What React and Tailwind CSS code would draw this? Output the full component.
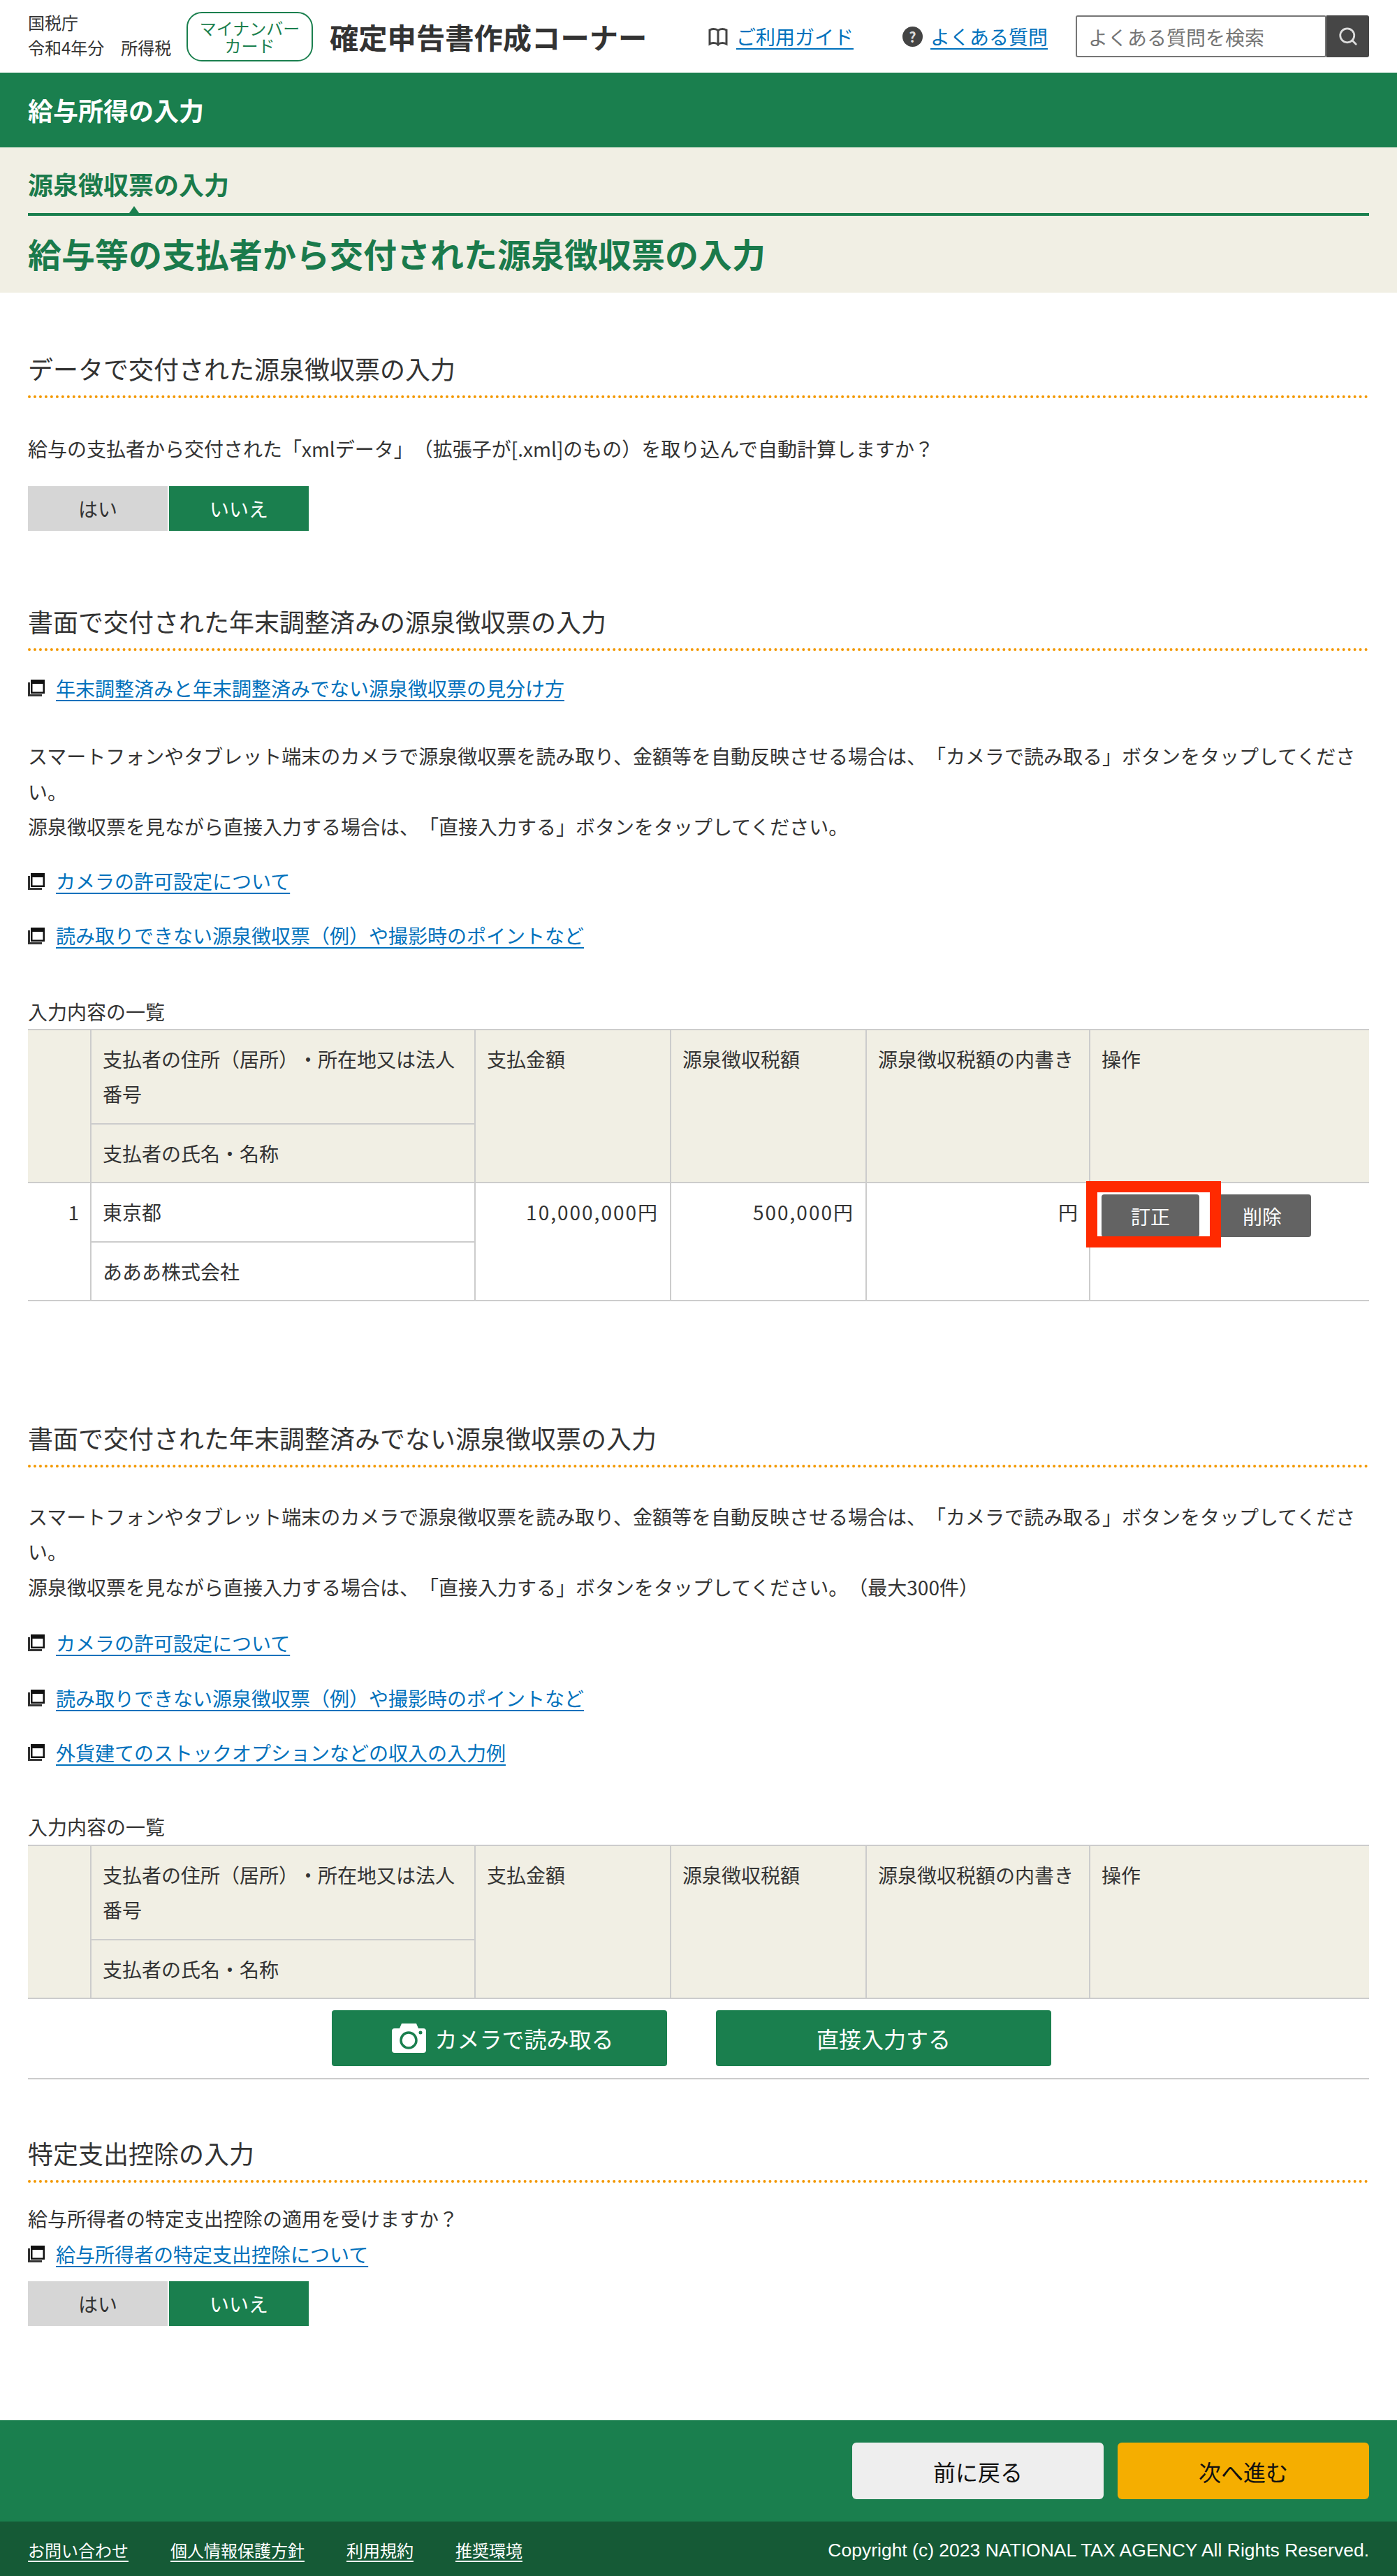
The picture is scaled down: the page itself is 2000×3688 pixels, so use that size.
import { Search } from "lucide-react";

const jp = { fontFamily: '"Noto Sans CJK JP", "Noto Sans", sans-serif' };

function WindowIcon() {
    return (
        <svg width="24" height="24" viewBox="0 0 24 24" className="mr-4 shrink-0">
            <path d="M0 4h3v17h17v3H0z" fill="#333" />
            <rect x="4" y="0" width="20" height="20" fill="#111" />
            <rect x="6.5" y="6" width="15" height="11.5" fill="#fff" />
        </svg>
    );
}

function LinkRow({ children, className = "" }) {
    return (
        <div className={`flex items-center h-[50px] ${className}`}>
            <WindowIcon />
            <a className="text-[#0071bc] underline underline-offset-[5px] decoration-2">{children}</a>
        </div>
    );
}

function SectionHeading({ children, className = "" }) {
    return (
        <h2 className={`text-[36px] leading-[54px] pb-3 border-b-4 border-dotted border-[#f39800] ${className}`}>
            {children}
        </h2>
    );
}

function Toggle({ className = "" }) {
    return (
        <div className={`flex gap-[2px] ${className}`}>
            <button className="w-[200px] h-[64px] bg-[#d6d6d6] text-[#333]">はい</button>
            <button className="w-[200px] h-[64px] bg-[#1a7f4e] text-white">いいえ</button>
        </div>
    );
}

const cell = "border-2 border-[#ccc] px-4 py-4 align-top font-normal text-left";

function TableHead() {
    return (
        <>
            <colgroup>
                <col className="w-[90px]" />
                <col className="w-[550px]" />
                <col className="w-[280px]" />
                <col className="w-[280px]" />
                <col className="w-[320px]" />
                <col className="w-[400px]" />
            </colgroup>
            <thead className="bg-[#f1efe4]">
                <tr>
                    <th rowSpan={2} className={`${cell} border-l-0`}></th>
                    <th className={cell}>支払者の住所（居所）・所在地又は法人番号</th>
                    <th rowSpan={2} className={cell}>支払金額</th>
                    <th rowSpan={2} className={cell}>源泉徴収税額</th>
                    <th rowSpan={2} className={cell}>源泉徴収税額の内書き</th>
                    <th rowSpan={2} className={`${cell} border-r-0`}>操作</th>
                </tr>
                <tr>
                    <th className={cell}>支払者の氏名・名称</th>
                </tr>
            </thead>
        </>
    );
}

function GrayButton({ children }) {
    return (
        <button className="w-[140px] h-[61px] rounded-[4px] bg-[#636363] text-white">{children}</button>
    );
}

export default function App() {
    return (
        <div className="bg-white text-[#333] text-[28px] leading-[50.4px] [text-spacing-trim:space-all]" style={jp}>
            {/* Header */}
            <header className="h-[104px] flex items-center justify-between px-10">
                <div className="flex items-center">
                    <div className="w-[227px] text-[24px] leading-[36px] mb-1">
                        <p>国税庁</p>
                        <p>令和4年分　所得税</p>
                    </div>
                    <div className="w-[181px] h-[71px] border-2 border-[#1a7f4e] rounded-[22px] flex items-center justify-center text-center text-[#1a7f4e] text-[24px] leading-[25px]">
                        マイナンバー<br />カード
                    </div>
                    <p className="ml-6 text-[41.300px] leading-[60px] font-bold whitespace-nowrap">確定申告書作成コーナー</p>
                </div>
                <div className="flex items-center">
                    <svg width="28" height="28" viewBox="0 0 28 28" fill="none" stroke="#444" strokeWidth="3" className="mr-3">
                        <path d="M14 6C12 3 6 3 2 5V25C6 23 12 23 14 26C16 23 22 23 26 25V5C22 3 16 3 14 6ZM14 6V26" />
                    </svg>
                    <a className="text-[#0071bc] underline underline-offset-[5px] decoration-2">ご利用ガイド</a>
                    <span className="ml-[70px] mr-[11px] w-[29px] h-[29px] rounded-full bg-[#444] text-[#ddd] text-[20px] leading-[29px] text-center font-bold">?</span>
                    <a className="text-[#0071bc] underline underline-offset-[5px] decoration-2">よくある質問</a>
                    <div className="ml-10 flex h-[60px]">
                        <div className="w-[359px] border-2 border-[#767676] rounded-[3px] pl-[16px] text-[#757575] leading-[58px]">よくある質問を検索</div>
                        <div className="w-[61px] bg-[#464646] rounded-r-[3px] flex items-center justify-center">
                            <Search size={30} color="#ddd" strokeWidth={2.200} />
                        </div>
                    </div>
                </div>
            </header>

            {/* Page title */}
            <div className="h-[107px] bg-[#1a7f4e] flex items-center px-10 text-white text-[36px] font-bold">給与所得の入力</div>
            <div className="h-[208px] bg-[#f1efe4] px-10 text-[#1a7a4b] font-bold">
                <div className="relative h-[98px] border-b-4 border-[#1a7f4e] flex items-end">
                    <p className="text-[36px] leading-[48px] pb-[18px]">源泉徴収票の入力</p>
                    <span className="absolute left-[145px] bottom-0 w-0 h-0 border-x-[7px] border-x-transparent border-b-[10px] border-b-[#1a7f4e]"></span>
                </div>
                <h1 className="mt-[23px] text-[48px] leading-[60px]">給与等の支払者から交付された源泉徴収票の入力</h1>
            </div>

            <main className="px-10">
                {/* XML */}
                <SectionHeading className="mt-[81px]">データで交付された源泉徴収票の入力</SectionHeading>
                <p className="mt-[47px]">給与の支払者から交付された「xmlデータ」（拡張子が[.xml]のもの）を取り込んで自動計算しますか？</p>
                <Toggle className="mt-[29px]" />

                {/* Year-end adjusted */}
                <SectionHeading className="mt-[102px]">書面で交付された年末調整済みの源泉徴収票の入力</SectionHeading>
                <LinkRow className="mt-[28px]">年末調整済みと年末調整済みでない源泉徴収票の見分け方</LinkRow>
                <p className="mt-[47px]">
                    スマートフォンやタブレット端末のカメラで源泉徴収票を読み取り、金額等を自動反映させる場合は、「カメラで読み取る」ボタンをタップしてください。<br />
                    源泉徴収票を見ながら直接入力する場合は、「直接入力する」ボタンをタップしてください。
                </p>
                <LinkRow className="mt-[28px]">カメラの許可設定について</LinkRow>
                <LinkRow className="mt-[28px]">読み取りできない源泉徴収票（例）や撮影時のポイントなど</LinkRow>
                <p className="mt-[58px]">入力内容の一覧</p>
                <table className="w-full table-fixed border-collapse">
                    <TableHead />
                    <tbody>
                        <tr>
                            <td rowSpan={2} className={`${cell} border-l-0 text-right!`}>1</td>
                            <td className={cell}>東京都</td>
                            <td rowSpan={2} className={`${cell} text-right! tracking-[2px]`}>10,000,000円</td>
                            <td rowSpan={2} className={`${cell} text-right! tracking-[2px]`}>500,000円</td>
                            <td rowSpan={2} className={`${cell} text-right!`}>円</td>
                            <td rowSpan={2} className={`${cell} border-r-0`}>
                                <div className="flex gap-5">
                                    <div className="relative">
                                        <GrayButton>訂正</GrayButton>
                                        {/* red annotation */}
                                        <span className="absolute z-10 -left-[22px] -top-[19px] w-[193px] h-[95px] border-[16px] border-[#ff2a00]"></span>
                                    </div>
                                    <GrayButton>削除</GrayButton>
                                </div>
                            </td>
                        </tr>
                        <tr>
                            <td className={cell}>あああ株式会社</td>
                        </tr>
                    </tbody>
                </table>

                {/* Not adjusted */}
                <SectionHeading className="mt-[168px]">書面で交付された年末調整済みでない源泉徴収票の入力</SectionHeading>
                <p className="mt-[45px]">
                    スマートフォンやタブレット端末のカメラで源泉徴収票を読み取り、金額等を自動反映させる場合は、「カメラで読み取る」ボタンをタップしてください。<br />
                    源泉徴収票を見ながら直接入力する場合は、「直接入力する」ボタンをタップしてください。（最大300件）
                </p>
                <LinkRow className="mt-[30px]">カメラの許可設定について</LinkRow>
                <LinkRow className="mt-[29px]">読み取りできない源泉徴収票（例）や撮影時のポイントなど</LinkRow>
                <LinkRow className="mt-[28px]">外貨建てのストックオプションなどの収入の入力例</LinkRow>
                <p className="mt-[56px]">入力内容の一覧</p>
                <table className="w-full table-fixed border-collapse">
                    <TableHead />
                </table>
                <div className="pt-4 pb-[17px] pr-5 border-b-2 border-[#ccc] flex justify-center gap-[70px] text-[32px] text-white">
                    <button className="w-[480px] h-[80px] pl-[10px] rounded-[4px] bg-[#1a7f4e] flex items-center justify-center gap-3">
                        <svg width="49" height="42" viewBox="0 0 49 42">
                            <path d="M4 7h7l3-7h21l3 7h7a4 4 0 0 1 4 4v27a4 4 0 0 1-4 4H4a4 4 0 0 1-4-4V11a4 4 0 0 1 4-4z" fill="#fff" />
                            <circle cx="24" cy="24" r="11" fill="none" stroke="#1a7f4e" strokeWidth="3.500" />
                            <circle cx="41" cy="13" r="2.500" fill="#1a7f4e" />
                        </svg>
                        カメラで読み取る
                    </button>
                    <button className="w-[480px] h-[80px] rounded-[4px] bg-[#1a7f4e]">直接入力する</button>
                </div>

                {/* Specific expenses */}
                <SectionHeading className="mt-[78px]">特定支出控除の入力</SectionHeading>
                <p className="mt-[26px]">給与所得者の特定支出控除の適用を受けますか？</p>
                <LinkRow className="mt-[1px]">給与所得者の特定支出控除について</LinkRow>
                <Toggle className="mt-[14px]" />
            </main>

            {/* Footer */}
            <div className="mt-[135px] h-[145px] bg-[#1a7f4e] flex items-center justify-end gap-5 px-10 text-[32px] text-[#111]">
                <button className="w-[360px] h-[81px] rounded-[6px] bg-[#eeeeee]">前に戻る</button>
                <button className="w-[360px] h-[81px] rounded-[6px] bg-[#f5ae00]">次へ進む</button>
            </div>
            <footer className="h-[81px] bg-[#155a36] flex items-center justify-between px-10 text-white text-[24px]">
                <nav className="flex gap-[60px]">
                    <a className="underline underline-offset-[5px] decoration-2">お問い合わせ</a>
                    <a className="underline underline-offset-[5px] decoration-2">個人情報保護方針</a>
                    <a className="underline underline-offset-[5px] decoration-2">利用規約</a>
                    <a className="underline underline-offset-[5px] decoration-2">推奨環境</a>
                </nav>
                <p className="font-['Liberation_Sans'] text-[26.500px]">Copyright (c) 2023 NATIONAL TAX AGENCY All Rights Reserved.</p>
            </footer>
        </div>
    );
}
